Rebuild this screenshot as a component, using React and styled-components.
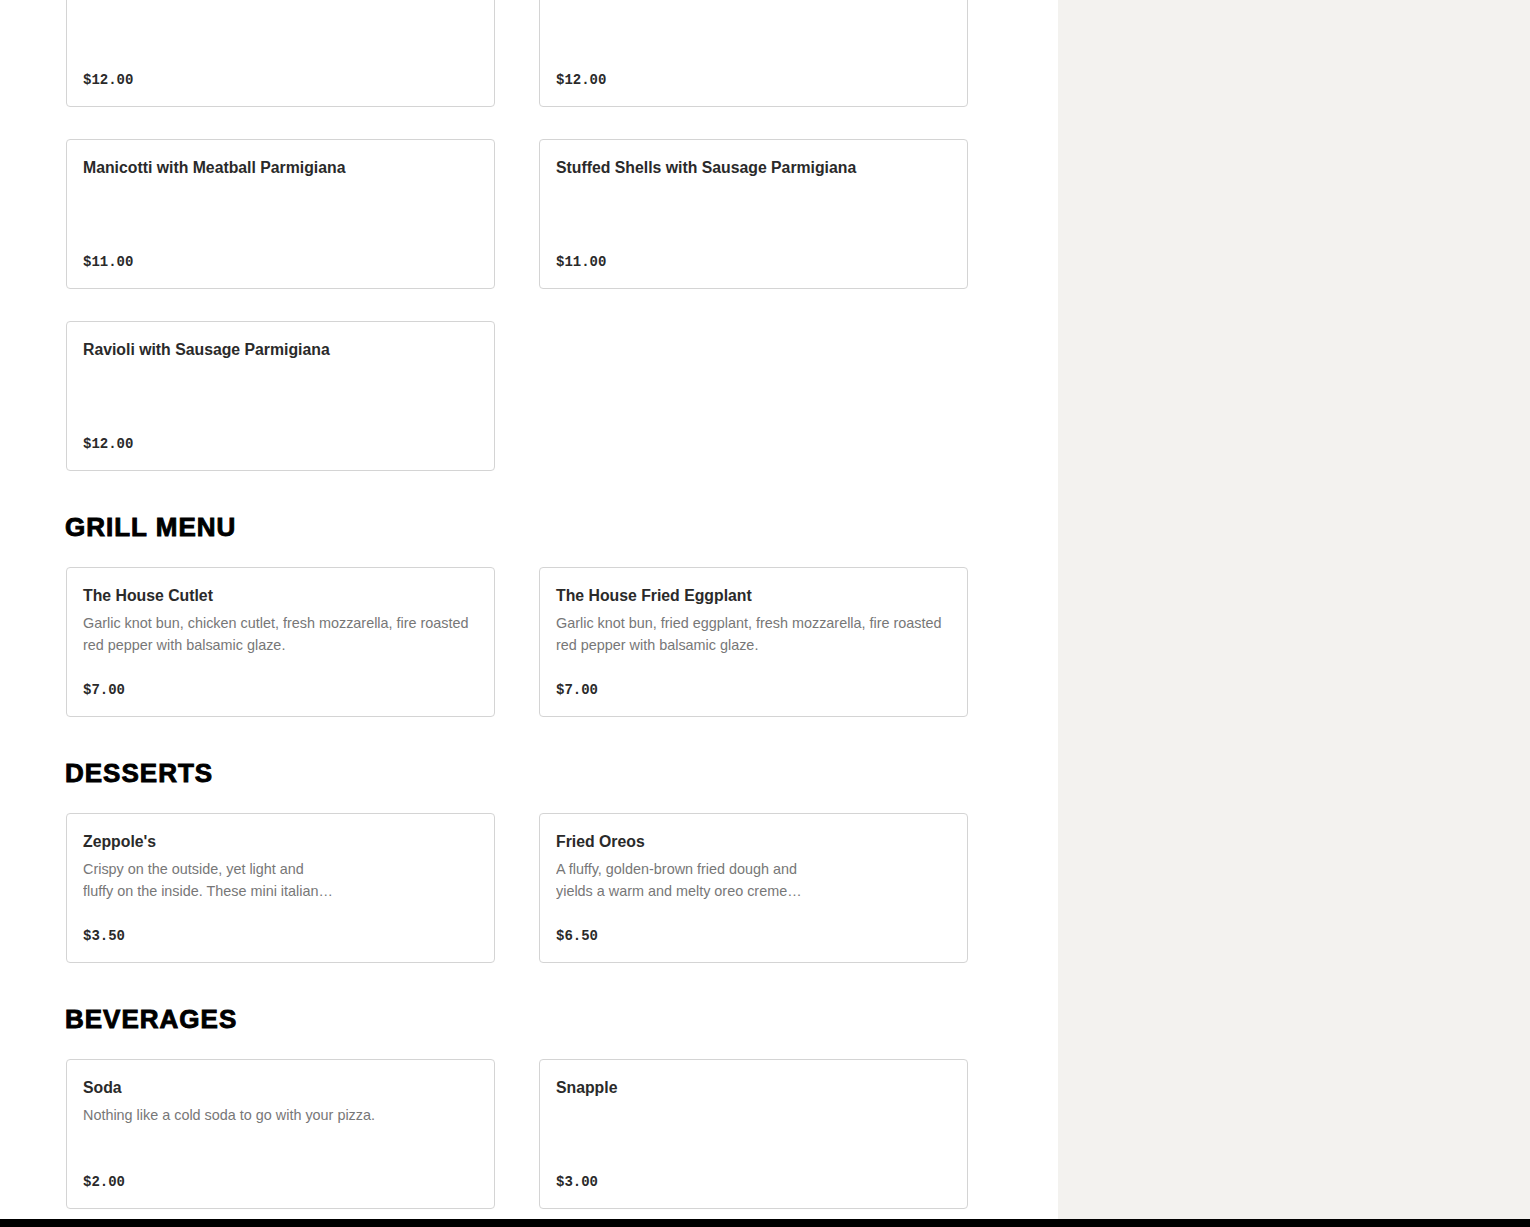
import styled, { createGlobalStyle } from 'styled-components';

const GlobalStyle = createGlobalStyle`
    html, body {
        margin: 0;
        padding: 0;
        height: 100%;
        overflow: hidden;
        background: #ffffff;
    }
    #root {
        height: 100%;
    }
`;

const Page = styled.div`
    display: grid;
    grid-template-columns: 1058px 1fr;
    grid-template-rows: 1fr 8px;
    height: 100vh;
`;

const Main = styled.main`
    overflow: hidden;
    background: #ffffff;
    padding: 0 90px 0 66px;
`;

// the list is scrolled a little past its first row
const Scroller = styled.div`
    margin-top: -43px;
`;

const Sidebar = styled.aside`
    background: #f3f2ef;
`;

const BottomBar = styled.div`
    grid-column: 1 / -1;
    background: #000000;
`;

const Section = styled.section`
    & + & {
        margin-top: 40px;
    }
`;

const SectionTitle = styled.h2`
    margin: 0 0 24px -1px;
    height: 32px;
    line-height: 32px;
    font-family: 'Liberation Sans', Arial, sans-serif;
    font-weight: 900;
    font-size: 26px;
    letter-spacing: 1px;
    -webkit-text-stroke: 0.9px #000000;
    color: #000000;
    text-transform: uppercase;
`;

const Grid = styled.div`
    display: grid;
    grid-template-columns: 429px 429px;
    column-gap: 44px;
    row-gap: 32px;
`;

const Card = styled.div`
    box-sizing: border-box;
    height: 150px;
    border: 1px solid #d4d4d4;
    border-radius: 4px;
    background: #ffffff;
    padding: 16px;
    display: flex;
    flex-direction: column;
`;

const ItemName = styled.div`
    font-family: 'Liberation Sans', Arial, sans-serif;
    font-weight: 700;
    font-size: 15.8px;
    line-height: 24px;
    color: #2a2a2a;
`;

const ItemDesc = styled.div`
    margin-top: 4px;
    max-width: ${(p) => (p.$narrow ? '250px' : 'none')};
    font-family: 'Liberation Sans', Arial, sans-serif;
    font-size: 14.4px;
    line-height: 22px;
    color: #777777;
    display: -webkit-box;
    -webkit-line-clamp: 2;
    -webkit-box-orient: vertical;
    overflow: hidden;
`;

const Price = styled.div`
    margin-top: auto;
    font-family: 'Liberation Mono', 'Courier New', monospace;
    font-weight: 700;
    font-size: 14px;
    line-height: 20px;
    color: #2a2a2a;
`;

const sections = [
    {
        title: null,
        items: [
            { name: 'Baked Ziti with Sausage Parmigiana', price: '$12.00' },
            { name: 'Lasagna with Meatball Parmigiana', price: '$12.00' },
            { name: 'Manicotti with Meatball Parmigiana', price: '$11.00' },
            { name: 'Stuffed Shells with Sausage Parmigiana', price: '$11.00' },
            { name: 'Ravioli with Sausage Parmigiana', price: '$12.00' },
        ],
    },
    {
        title: 'Grill Menu',
        items: [
            {
                name: 'The House Cutlet',
                desc: 'Garlic knot bun, chicken cutlet, fresh mozzarella, fire roasted red pepper with balsamic glaze.',
                price: '$7.00',
            },
            {
                name: 'The House Fried Eggplant',
                desc: 'Garlic knot bun, fried eggplant, fresh mozzarella, fire roasted red pepper with balsamic glaze.',
                price: '$7.00',
            },
        ],
    },
    {
        title: 'Desserts',
        items: [
            {
                name: "Zeppole's",
                desc: 'Crispy on the outside, yet light and fluffy on the inside. These mini italian donuts are tossed in powdered sugar.',
                price: '$3.50',
                narrow: true,
            },
            {
                name: 'Fried Oreos',
                desc: 'A fluffy, golden-brown fried dough and yields a warm and melty oreo creme center.',
                price: '$6.50',
                narrow: true,
            },
        ],
    },
    {
        title: 'Beverages',
        items: [
            { name: 'Soda', desc: 'Nothing like a cold soda to go with your pizza.', price: '$2.00' },
            { name: 'Snapple', price: '$3.00' },
        ],
    },
];

const MenuCard = ({ item }) => (
    <Card>
        <ItemName>{item.name}</ItemName>
        {item.desc ? <ItemDesc $narrow={item.narrow}>{item.desc}</ItemDesc> : null}
        <Price>{item.price}</Price>
    </Card>
);

const App = () => {
    return (
        <>
            <GlobalStyle />
            <Page>
                <Main>
                    <Scroller>
                        {sections.map((section, i) => (
                            <Section key={i}>
                                {section.title && <SectionTitle>{section.title}</SectionTitle>}
                                <Grid>
                                    {section.items.map((item) => (
                                        <MenuCard item={item} key={item.name} />
                                    ))}
                                </Grid>
                            </Section>
                        ))}
                    </Scroller>
                </Main>
                <Sidebar />
                <BottomBar />
            </Page>
        </>
    );
};

export default App;
